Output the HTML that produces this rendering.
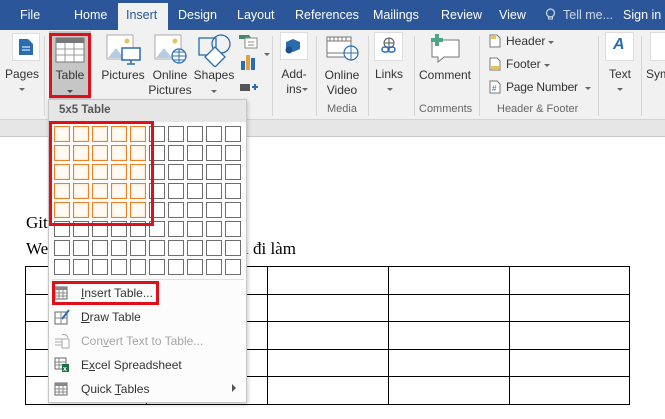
<!DOCTYPE html>
<html><head><meta charset="utf-8"><style>
*{margin:0;padding:0;box-sizing:border-box}
body{width:665px;height:419px;overflow:hidden;position:relative;background:#fff;font-family:"Liberation Sans",sans-serif}
.a{position:absolute}
.tab{position:absolute;top:8px;color:#fff;font-size:12.5px}
.lbl{position:absolute;font-size:12px;color:#333;text-align:center;line-height:15px}
.grp{position:absolute;top:103px;font-size:11px;color:#666}
.sep{position:absolute;top:36px;width:1px;height:80px;background:#d6d6d6}
.arr{position:absolute;width:0;height:0;border-left:3px solid transparent;border-right:3px solid transparent;border-top:3px solid #666}
.cell{position:absolute;width:16px;height:16px;border:1px solid #6d6d6d;background:#fff}
.cell.o{border-color:#e8822a;background:#fffaf3;box-shadow:inset 0 0 2px #fbd3a4}
.mi{position:absolute;left:81px;font-size:12px;color:#333}
.mi u{text-decoration:underline}
.tl{position:absolute;background:#000}
.doc{position:absolute;font-family:"Liberation Serif",serif;font-size:17px;color:#000}
</style></head><body>
<div class="a" style="left:0;top:0;width:665px;height:30px;background:#2b579a"></div>
<div class="a" style="left:118px;top:3px;width:50px;height:28px;background:#f1f1f1"></div>
<div class="tab" style="left:20px">File</div>
<div class="tab" style="left:74px">Home</div>
<div class="tab" style="left:126px;color:#2b579a">Insert</div>
<div class="tab" style="left:178px">Design</div>
<div class="tab" style="left:237px">Layout</div>
<div class="tab" style="left:295px">References</div>
<div class="tab" style="left:373px">Mailings</div>
<div class="tab" style="left:441px">Review</div>
<div class="tab" style="left:499px">View</div>
<svg class="a" style="left:545px;top:8px" width="11" height="14"><circle cx="5.5" cy="5" r="4" fill="none" stroke="#cfd9ea" stroke-width="1.2"/><path d="M3.5 9v2h4V9" fill="none" stroke="#cfd9ea"/></svg>
<div class="tab" style="left:563px;color:#cfd9ea">Tell me...</div>
<div class="tab" style="left:623px">Sign in</div>
<div class="a" style="left:0;top:30px;width:665px;height:89px;background:#f1f1f1"></div>
<div class="a" style="left:0;top:119px;width:665px;height:18px;background:#e6e6e6;border-top:1px solid #d4d4d4;border-bottom:1px solid #c8c8c8"></div>
<div class="a" style="left:12px;top:33px;width:28px;height:28px;background:#fff;border:1px solid #ddd"></div>
<svg class="a" style="left:18px;top:38px" width="16" height="18"><path d="M1 1h9l5 5v11H1z" fill="#2b6cb0"/><path d="M4 9h8M4 12h8" stroke="#fff"/></svg>
<div class="lbl" style="left:4px;top:67px;width:36px">Pages</div>
<div class="arr" style="left:19px;top:88px"></div>
<div class="sep" style="left:44px"></div>
<div class="a" style="left:49px;top:31px;width:42px;height:68px;background:#c6c6c6"></div>
<svg class="a" style="left:55px;top:37px" width="30" height="26"><rect x="1" y="1" width="28" height="24" fill="#fff" stroke="#777"/><rect x="1" y="1" width="28" height="5" fill="#777"/><path d="M1 12h28M1 18h28M10 6v19M19 6v19" stroke="#999"/></svg>
<div class="lbl" style="left:49px;top:68px;width:42px">Table</div>
<div class="arr" style="left:67px;top:90px;border-top-color:#444"></div>
<div class="a" style="left:49px;top:33px;width:42px;height:65px;border:3px solid #e0101a"></div>
<svg class="a" style="left:106px;top:34px" width="36" height="32"><rect x="1" y="1" width="26" height="24" fill="#fff" stroke="#aaa"/><circle cx="21" cy="7" r="2.5" fill="#e8c25c"/><path d="M2 24l8-10 8 10z" fill="#b7cbe2"/><rect x="16" y="14" width="18" height="12" fill="#fff" stroke="#2b6cb0" stroke-width="1.5"/><path d="M25 26v4M21 30h8" stroke="#2b6cb0" stroke-width="1.5"/></svg>
<div class="lbl" style="left:98px;top:68px;width:50px">Pictures</div>
<svg class="a" style="left:154px;top:34px" width="36" height="32"><rect x="1" y="1" width="26" height="24" fill="#fff" stroke="#aaa"/><circle cx="21" cy="7" r="2.5" fill="#e8c25c"/><path d="M2 24l8-10 8 10z" fill="#b7cbe2"/><circle cx="25" cy="22" r="7" fill="#fff" stroke="#2b6cb0" stroke-width="1.3"/><path d="M18 22h14M25 15v14M20 18h10M20 26h10" stroke="#2b6cb0"/></svg>
<div class="lbl" style="left:148px;top:68px;width:44px">Online<br>Pictures</div>
<svg class="a" style="left:197px;top:33px" width="36" height="34"><rect x="2" y="5" width="17" height="17" fill="none" stroke="#2b6cb0" stroke-width="1.3"/><circle cx="24" cy="11" r="9" fill="none" stroke="#2b6cb0" stroke-width="1.3"/><path d="M18 14l10 10-10 10-10-10z" fill="#fff" stroke="#2b6cb0" stroke-width="1.3"/></svg>
<div class="lbl" style="left:192px;top:68px;width:44px">Shapes</div>
<div class="arr" style="left:211px;top:90px"></div>
<svg class="a" style="left:238px;top:33px" width="22" height="60"><path d="M1 2h10l3 4H1z" fill="#3e8a6a"/><rect x="7" y="5" width="12" height="10" fill="#fff" stroke="#888"/><path d="M10 9h6M10 12h6" stroke="#888"/><rect x="3" y="28" width="4" height="9" fill="#2b6cb0"/><rect x="8" y="22" width="4" height="15" fill="#e0a040"/><rect x="13" y="25" width="4" height="12" fill="#2b6cb0"/><rect x="2" y="51" width="10" height="7" fill="#555"/><path d="M14 54h6M17 51v6" stroke="#2b6cb0" stroke-width="2"/></svg>
<div class="arr" style="left:264px;top:53px"></div>
<div class="sep" style="left:272px"></div>
<div class="a" style="left:280px;top:32px;width:28px;height:28px;background:#fff;border:1px solid #ddd"></div>
<svg class="a" style="left:285px;top:37px" width="18" height="18"><path d="M8 2l7 3v7l-7 3-7-3V5z" fill="#2b6cb0"/><circle cx="4" cy="13" r="3.5" fill="#1f4e8c"/></svg>
<div class="lbl" style="left:276px;top:67px;width:36px">Add-<br>ins</div>
<div class="arr" style="left:302px;top:88px"></div>
<div class="sep" style="left:316px"></div>
<svg class="a" style="left:326px;top:33px" width="34" height="30"><rect x="1" y="4" width="24" height="20" fill="#fff" stroke="#777"/><path d="M1 8h24M1 20h24" stroke="#777"/><path d="M4 4v4M8 4v4M12 4v4M16 4v4M20 4v4" stroke="#777"/><circle cx="25" cy="20" r="7" fill="#fff" stroke="#2b6cb0" stroke-width="1.2"/><path d="M18 20h14M25 13v14" stroke="#2b6cb0"/></svg>
<div class="lbl" style="left:320px;top:68px;width:44px">Online<br>Video</div>
<div class="grp" style="left:327px">Media</div>
<div class="sep" style="left:368px"></div>
<div class="a" style="left:374px;top:32px;width:29px;height:29px;background:#fff;border:1px solid #ddd"></div>
<svg class="a" style="left:381px;top:37px" width="16" height="18"><circle cx="8" cy="6" r="5" fill="none" stroke="#555"/><path d="M3 6h10M8 1v10" stroke="#555"/><rect x="1" y="10" width="7" height="5" rx="2.5" fill="none" stroke="#2b6cb0" stroke-width="1.5"/><rect x="7" y="10" width="7" height="5" rx="2.5" fill="none" stroke="#2b6cb0" stroke-width="1.5"/></svg>
<div class="lbl" style="left:372px;top:67px;width:34px">Links</div>
<div class="arr" style="left:387px;top:88px"></div>
<div class="sep" style="left:414px"></div>
<svg class="a" style="left:428px;top:33px" width="34" height="30"><path d="M4 7h27v17H16l-6 5v-5H4z" fill="#fff" stroke="#777"/><path d="M9 1v12M3 7h12" stroke="#4ea58a" stroke-width="4"/></svg>
<div class="lbl" style="left:416px;top:68px;width:58px">Comment</div>
<div class="grp" style="left:419px">Comments</div>
<div class="sep" style="left:479px"></div>
<svg class="a" style="left:489px;top:34px" width="12" height="14"><path d="M1 1h7l3 3v9H1z" fill="#fff" stroke="#777"/><rect x="2" y="2" width="5" height="3" fill="#e8c25c"/></svg>
<div class="lbl" style="left:506px;top:34px;text-align:left">Header</div>
<div class="arr" style="left:548px;top:41px"></div>
<svg class="a" style="left:489px;top:57px" width="12" height="14"><path d="M1 1h7l3 3v9H1z" fill="#fff" stroke="#777"/><rect x="2" y="9" width="8" height="3" fill="#e8c25c"/></svg>
<div class="lbl" style="left:506px;top:57px;text-align:left">Footer</div>
<div class="arr" style="left:544px;top:64px"></div>
<svg class="a" style="left:489px;top:80px" width="12" height="14"><path d="M1 1h7l3 3v9H1z" fill="#fff" stroke="#777"/><text x="3" y="11" font-size="8" fill="#2b6cb0" font-family="Liberation Sans">#</text></svg>
<div class="lbl" style="left:506px;top:80px;text-align:left;letter-spacing:-0.2px">Page Number</div>
<div class="arr" style="left:585px;top:87px"></div>
<div class="grp" style="left:497px">Header &amp; Footer</div>
<div class="sep" style="left:598px"></div>
<div class="a" style="left:605px;top:32px;width:29px;height:29px;background:#fff;border:1px solid #ddd"></div>
<div class="a" style="left:613px;top:36px;font-size:16px;font-weight:bold;font-style:italic;color:#2b6cb0">A</div>
<div class="lbl" style="left:604px;top:67px;width:32px">Text</div>
<div class="arr" style="left:617px;top:88px"></div>
<div class="sep" style="left:641px"></div>
<div class="a" style="left:650px;top:32px;width:20px;height:29px;background:#fff;border:1px solid #ddd"></div>
<div class="lbl" style="left:646px;top:67px;text-align:left">Sym</div>
<div class="doc" style="left:26px;top:213px">Git</div>
<div class="doc" style="left:26px;top:239px">We</div>
<div class="doc" style="left:244px;top:239px">i đi làm</div>
<div class="tl" style="left:25px;top:266px;width:605px;height:1px"></div>
<div class="tl" style="left:25px;top:294px;width:605px;height:1px"></div>
<div class="tl" style="left:25px;top:321px;width:605px;height:1px"></div>
<div class="tl" style="left:25px;top:349px;width:605px;height:1px"></div>
<div class="tl" style="left:25px;top:376px;width:605px;height:1px"></div>
<div class="tl" style="left:25px;top:404px;width:605px;height:1px"></div>
<div class="tl" style="left:25px;top:266px;width:1px;height:139px"></div>
<div class="tl" style="left:146px;top:266px;width:1px;height:139px"></div>
<div class="tl" style="left:267px;top:266px;width:1px;height:139px"></div>
<div class="tl" style="left:388px;top:266px;width:1px;height:139px"></div>
<div class="tl" style="left:509px;top:266px;width:1px;height:139px"></div>
<div class="tl" style="left:629px;top:266px;width:1px;height:139px"></div>
<div class="a" style="left:48px;top:99px;width:199px;height:304px;background:#fcfcfc;border:1px solid #c6c6c6;box-shadow:1px 2px 4px rgba(0,0,0,.2)"></div>
<div class="a" style="left:49px;top:100px;width:197px;height:22px;background:#e6e6e6"></div>
<div class="a" style="left:59px;top:104px;font-size:11.5px;font-weight:bold;color:#555">5x5 Table</div>
<div id="grid"></div>
<div class="a" style="left:52px;top:279px;width:192px;height:1px;background:#e0e0e0"></div>
<svg class="a" style="left:54px;top:286px" width="14" height="14"><rect x="1" y="1" width="12" height="12" fill="#fff" stroke="#666"/><rect x="1" y="1" width="12" height="3" fill="#888"/><path d="M1 7h12M1 10h12M5 4v9M9 4v9" stroke="#888"/></svg>
<div class="mi" style="top:286px"><u>I</u>nsert Table...</div>
<svg class="a" style="left:54px;top:309px" width="16" height="16"><rect x="1" y="3" width="12" height="12" fill="#fff" stroke="#666"/><path d="M1 9h12M7 3v12" stroke="#888"/><path d="M8 10l7-9" stroke="#2b6cb0" stroke-width="2"/></svg>
<div class="mi" style="top:310px"><u>D</u>raw Table</div>
<svg class="a" style="left:54px;top:333px" width="16" height="16"><path d="M1 6h7M1 9h7M1 12h7" stroke="#aaa"/><rect x="8" y="6" width="7" height="9" fill="#fff" stroke="#aaa"/><path d="M8 2q4-2 6 3" stroke="#aaa" fill="none"/></svg>
<div class="mi" style="top:334px;color:#a6a6a6">Con<u>v</u>ert Text to Table...</div>
<svg class="a" style="left:54px;top:357px" width="16" height="16"><rect x="1" y="1" width="11" height="11" fill="#fff" stroke="#666"/><path d="M1 5h11M1 8h11M5 1v11" stroke="#888"/><rect x="8" y="7" width="7" height="8" fill="#1e7145"/><text x="9" y="14" font-size="7" fill="#fff" font-family="Liberation Sans" font-weight="bold">x</text></svg>
<div class="mi" style="top:358px">E<u>x</u>cel Spreadsheet</div>
<svg class="a" style="left:54px;top:382px" width="14" height="14"><rect x="1" y="1" width="12" height="12" fill="#fff" stroke="#666"/><rect x="1" y="1" width="12" height="3" fill="#888"/><path d="M1 7h12M1 10h12M5 4v9M9 4v9" stroke="#888"/></svg>
<div class="mi" style="top:382px">Quick <u>T</u>ables</div>
<div class="a" style="left:232px;top:384px;width:0;height:0;border-top:4px solid transparent;border-bottom:4px solid transparent;border-left:4px solid #555"></div>
<div class="a" style="left:52px;top:281px;width:107px;height:24px;border:3px solid #e0101a"></div>
<div class="a" style="left:49px;top:121px;width:105px;height:105px;border:3px solid #e0101a"></div>
<script>
var g=document.getElementById('grid'),h='';
for(var r=0;r<8;r++)for(var c=0;c<10;c++){h+='<div class="cell'+(r<5&&c<5?' o':'')+'" style="left:'+(54+c*19)+'px;top:'+(126+r*19)+'px"></div>';}
g.innerHTML=h;
</script>
</body></html>
